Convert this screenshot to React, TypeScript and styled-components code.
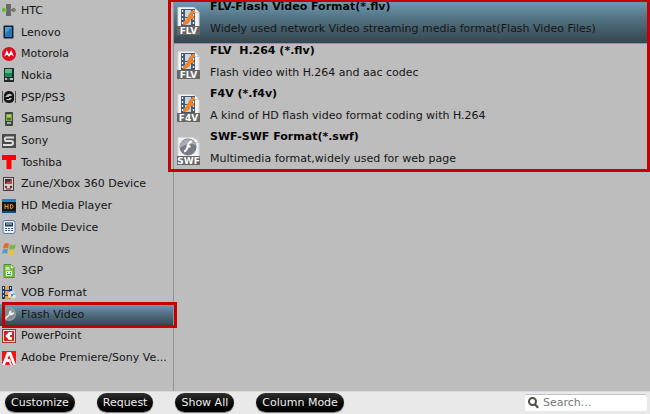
import React from "react";
import styled, { createGlobalStyle, css } from "styled-components";

const GlobalStyle = createGlobalStyle`
  * { box-sizing: border-box; }
  html, body { margin: 0; padding: 0; background: #bdbdbd; }
  body, button, input { font-family: "DejaVu Sans", Verdana, sans-serif; font-size: 11px; }
`;

const Page = styled.div`
  display: flex;
  flex-direction: column;
  height: 100vh;
  overflow: hidden;
  color: #151515;
`;

const Main = styled.main`
  flex: 1;
  display: flex;
  min-height: 0;
`;

const Sidebar = styled.nav`
  flex: 0 0 174px;
  min-width: 0;
  display: flex;
  padding-bottom: 22px;
  border-right: 1px solid #929292;
`;

const DeviceList = styled.ul`
  flex: 1;
  min-width: 0;
  display: grid;
  grid-template-columns: minmax(0, 1fr);
  grid-auto-rows: 1fr;
  margin: 0;
  padding: 0;
  list-style: none;
`;

const selectedFill = css`
  background: linear-gradient(#71a0b8, #547485 40%, #35464e);
`;

const DeviceItem = styled.li<{ $selected?: boolean }>`
  position: relative;
  display: flex;
  min-width: 0;
  ${(p) =>
    p.$selected &&
    css`
      ${selectedFill}
      &::after {
        content: "";
        position: absolute;
        inset: -2px -4px -2px 2px;
        border: 3px solid #c40000;
        pointer-events: none;
      }
    `}
`;

const DeviceButton = styled.button`
  flex: 1;
  min-width: 0;
  display: flex;
  align-items: center;
  gap: 5px;
  padding: 0 2px 1px;
  border: 0;
  background: none;
  color: inherit;
  text-align: left;
  svg { flex: 0 0 14px; }
`;

const DeviceName = styled.span`
  white-space: nowrap;
`;

const FormatPane = styled.section`
  flex: 1;
  min-width: 0;
`;

const FormatList = styled.ul`
  position: relative;
  display: flex;
  flex-direction: column;
  margin: 0;
  padding: 0 0 1px;
  list-style: none;
  &::after {
    content: "";
    position: absolute;
    inset: 0 0 2px -6px;
    border: 3px solid #c40000;
    border-top-width: 2px;
    pointer-events: none;
  }
`;

const FormatItem = styled.li<{ $selected?: boolean }>`
  border-bottom: 0 solid transparent;
  &:first-child { border-bottom-width: 1px; }
  ${(p) => p.$selected && selectedFill}
`;

const FormatButton = styled.button`
  display: flex;
  align-items: flex-start;
  gap: 10px;
  width: 100%;
  height: 43px;
  padding: 0 0 0 3px;
  border: 0;
  background: none;
  color: inherit;
  text-align: left;
  svg { flex: 0 0 23px; margin-top: 7px; }
`;

const FormatText = styled.span`
  display: flex;
  flex-direction: column;
  line-height: 14px;
  gap: 8px;
  white-space: pre;
`;

const FormatTitle = styled.strong`
  color: #050505;
`;

const Toolbar = styled.footer`
  flex: 0 0 23px;
  display: flex;
  align-items: center;
  gap: 22px;
  padding: 0 3px 2px 5px;
  background: #e9e9e9;
  border-top: 1px solid #d8d8d8;
`;

const PillButton = styled.button`
  height: 19px;
  padding: 0 6px;
  border: 0;
  border-radius: 10px;
  background: linear-gradient(#303030, #050505 60%, #000);
  box-shadow: 0 1px 1px #777;
  color: #eee;
  white-space: nowrap;
`;

const SearchBox = styled.label`
  display: flex;
  align-items: center;
  gap: 4px;
  width: 122px;
  height: 17px;
  margin-left: auto;
  padding: 0 3px;
  border-radius: 2px;
  border-top: 1px solid #c4c4c4;
  background: #fff;
`;

const SearchInput = styled.input`
  flex: 1;
  min-width: 0;
  padding: 0;
  border: 0;
  outline: 0;
  background: none;
  &::placeholder { color: #777; opacity: 1; }
`;

const Glyph = ({ children }: { children: React.ReactNode }) => (
  <svg width="14" height="14" viewBox="0 0 14 14" aria-hidden="true">
    {children}
  </svg>
);

const icons: Record<string, React.ReactNode> = {
  HTC: (
    <Glyph>
      <path d="M4 1h5v4.500c-1 .2-1 2.800 0 3V13H4V8.500c1-.2 1-2.800 0-3z" fill="#686868" />
      <path d="M0 6c0-1 1-1.500 2-1.200l1.500 1.200H5v2H3.500L2 9C.8 9.200 0 8.500 0 7.500z" fill="#64bd38" />
      <path d="M8 6h2a2 2 0 1 1 0 2H8z" fill="#777" />
    </Glyph>
  ),
  Lenovo: (
    <Glyph>
      <rect x="1.500" y=".5" width="10" height="13" rx="1" fill="#18202b" />
      <rect x="3" y="2" width="7" height="10" fill="#2377b8" />
      <path d="M3 2h7L3 9z" fill="#4e9cd1" />
    </Glyph>
  ),
  Motorola: (
    <Glyph>
      <circle cx="7" cy="7" r="7" fill="#e20b20" />
      <path d="M2 10 4.800 3 7 7.500 9.200 3 12 10C11 8.500 9.800 8 9 8c-1 0-1.500 1-2 2-.5-1-1-2-2-2-.8 0-2 .5-3 2z" fill="#fff" />
    </Glyph>
  ),
  Nokia: (
    <Glyph>
      <rect x="2" y="0" width="10" height="14" fill="#252b2c" />
      <rect x="3" y="1" width="7" height="4" fill="#55bd83" />
      <path d="M3 5h7v4H3z" fill="#17845a" />
      <path d="M3 10h2v2H3zm5 0h3v2H8z" fill="#b9bcb8" />
      <path d="M5 11h3" stroke="#666" />
    </Glyph>
  ),
  "PSP/PS3": (
    <Glyph>
      <path d="M.5 1v12M13.500 1v12" stroke="#555" />
      <path d="M2 5Q3 1 7 1t5 4v5q-1 3-5 3t-5-3z" fill="#161616" />
      <path d="M4 6q2-3 5-2l1 2H7v1H3zm6 2q-1 3-5 2L4 9h3V8z" fill="#bbb" />
    </Glyph>
  ),
  Samsung: (
    <Glyph>
      <rect x="3" y="0" width="8" height="14" rx="1" fill="#3e493b" />
      <rect x="4" y="2" width="6" height="7" fill="#72a951" />
      <path d="M5 3h4v2H5z" fill="#d4c65c" />
      <path d="M5 7h4" stroke="#244321" />
      <path d="M5 10h4v2H5z" fill="#aaa" />
    </Glyph>
  ),
  Sony: (
    <Glyph>
      <rect width="14" height="14" fill="#4c4c4c" />
      <path d="M12 3.500H4.500Q2.500 3.500 3 5.500T5 7h4q2 0 2 2t-2 2H1" fill="none" stroke="#ddd" strokeWidth="2" />
    </Glyph>
  ),
  Toshiba: (
    <Glyph>
      <path d="M0 0h14v5H9.500v9h-5V5H0z" fill="#f00" />
    </Glyph>
  ),
  "Zune/Xbox 360 Device": (
    <Glyph>
      <rect x="1.500" y=".5" width="10" height="13" fill="#d9d0ce" stroke="#513b3d" />
      <path d="M3 2h7v5H3z" fill="#273444" />
      <path d="m3 7 3-3 1 1 3-3v5z" fill="#cf4141" />
      <circle cx="4" cy="10" r="1.200" fill="#8f3134" />
      <circle cx="9" cy="10" r="1.200" fill="#333" />
      <path d="M4 12h5" stroke="#713" />
    </Glyph>
  ),
  "HD Media Player": (
    <Glyph>
      <rect width="14" height="14" fill="#111821" />
      <path d="M0 0h14v3H0z" fill="#2482c2" />
      <path d="M0 12h14v2H0z" fill="#0b4f8a" />
      <path d="M3 5v5m3-5v5M3 7.500h3M8.500 5.500v4h1q1.500 0 1.500-2t-1.500-2z" fill="none" stroke="#ee9a24" />
    </Glyph>
  ),
  "Mobile Device": (
    <Glyph>
      <rect x="1" y=".5" width="12" height="13" rx="2" fill="#e8f1fb" stroke="#587ba7" />
      <path d="M3 2.500h8v4H3z" fill="#253a50" />
      <path d="M4 4h6" stroke="#bed5e6" />
      <path d="M3 8h2v1H3zm3 0h2v1H6zm3 0h2v1H9zM3 10h2v1H3zm3 0h2v1H6zm3 0h2v1H9z" fill="#3e5d7a" />
    </Glyph>
  ),
  Windows: (
    <Glyph>
      <path d="M2 2q2.500-2 5 0L6 6.500q-2.500-1-5 0z" fill="#e66b2e" />
      <path d="M8 2.500q3 1.500 6 0L12.500 7q-3 1-5.500 0z" fill="#78b83f" />
      <path d="M1 7.500q2.500-1 5 0L5 12q-2-2-5 0z" fill="#509bd3" />
      <path d="M7 8q3 1 5.500 0L11 12.500q-3 1-5-.5z" fill="#f1bf31" />
    </Glyph>
  ),
  "3GP": (
    <Glyph>
      <path d="M2 .5h7l3 3v10H2z" fill="#82bf45" stroke="#4b912f" />
      <path d="M9 1v3h3" fill="#e2f4d2" />
      <path d="M3.500 3h4v3h-4z" fill="#c7e9a8" />
      <path d="M4 7h6v5H4z" fill="#e5f6d7" />
      <path d="M5 8h1v1H5zm3 0h1v1H8zM5 10h4v1H5z" fill="#398b27" />
    </Glyph>
  ),
  "VOB Format": (
    <Glyph>
      <path d="M0 0h10v13H0z" fill="#193d70" />
      <path d="M3 0h4v4H3zm0 5h4v4H3zm0 5h4v3H3z" fill="#eda236" />
      <path d="M1 1h1v2H1zm0 4h1v2H1zm0 4h1v2H1zM8 1h1v2H8z" fill="#b9dfff" />
      <circle cx="10" cy="9" r="4" fill="#d9e9ef" />
      <path d="m10 9 2-3q2 1 2 3z" fill="#79bce2" />
      <path d="m10 9-2 3q2 1 3 1z" fill="#e7b85d" />
      <circle cx="10" cy="9" r="1" fill="#567" />
    </Glyph>
  ),
  "Flash Video": (
    <Glyph>
      <circle cx="7" cy="7" r="7" fill="#9ba1a7" />
      <circle cx="7" cy="7" r="5.800" fill="#858b91" />
      <path d="m3 11 4-4q-1-3 3-4L9 5l1 1 2-1q0 4-4 3l-4 4z" fill="#f1f3f4" />
    </Glyph>
  ),
  PowerPoint: (
    <Glyph>
      <rect x=".5" y=".5" width="13" height="13" fill="#f6dcda" stroke="#a33131" />
      <rect x="2" y="2" width="10" height="10" fill="#c92722" />
      <path d="M10 3H7L3.500 7 7 11h3V8H8V6h2z" fill="#fff" />
    </Glyph>
  ),
  "Adobe Premiere/Sony Ve...": (
    <Glyph>
      <rect width="14" height="14" fill="#f51313" />
      <path d="M0 14 5 1h4l5 13h-3L7 4 5.500 8H8l2 6H8l-1-3H4l-1 3z" fill="#fff" />
    </Glyph>
  ),
};

const SheetIcon = ({ label, flash }: { label: string; flash?: boolean }) => (
  <svg width="23" height="28" viewBox="0 0 23 28" aria-hidden="true">
    <path d="M1 .5h16l5 5V27H1z" fill="#f1f1f1" stroke="#d7d7d7" />
    <path d="M17 .5v5h5z" fill="#fff" stroke="#b5b5b5" strokeWidth=".6" />
    {flash ? (
      <>
        <circle cx="11" cy="10" r="8.500" fill="#767b86" />
        <path d="M3 8a8.500 8.500 0 0 1 16 0Q11 5 3 11z" fill="#a9acb4" />
        <path d="M15 4.500q-3 0-4 4-1 5-4 6M9.500 9.500h4" fill="none" stroke="#fff" strokeWidth="2" />
      </>
    ) : (
      <>
        <path d="M4 2h14v17H4z" fill="#46566c" />
        <path d="M8 3h6v7H8zm0 8h6v7H8z" fill="#c3d6e8" />
        <path d="M5.500 3v15M16.500 3v15" stroke="#edf3fb" strokeWidth="1.300" strokeDasharray="2 2" />
        <path d="M18 3q-5 0-7 6-2 5-5 6v3q6 0 8-6h3V9h-2q1-3 3-3z" fill="#ed842c" />
      </>
    )}
    <rect y="19" width="23" height="9" fill="#666" />
    <text x="11.500" y="27" textAnchor="middle" fontFamily="DejaVu Sans, sans-serif" fontSize="9" fontWeight="700" fill="#fff">
      {label}
    </text>
  </svg>
);

const formats = [
  { label: "FLV", title: "FLV-Flash Video Format(*.flv)", detail: "Widely used network Video streaming media format(Flash Video Files)" },
  { label: "FLV", title: "FLV  H.264 (*.flv)", detail: "Flash video with H.264 and aac codec" },
  { label: "F4V", title: "F4V (*.f4v)", detail: "A kind of HD flash video format coding with H.264" },
  { label: "SWF", title: "SWF-SWF Format(*.swf)", detail: "Multimedia format,widely used for web page" },
];

export default function App() {
  return (
    <Page>
      <GlobalStyle />
      <Main>
        <Sidebar aria-label="Devices">
          <DeviceList>
            {Object.entries(icons).map(([name, icon]) => (
              <DeviceItem key={name} $selected={name === "Flash Video"}>
                <DeviceButton type="button">
                  {icon}
                  <DeviceName>{name}</DeviceName>
                </DeviceButton>
              </DeviceItem>
            ))}
          </DeviceList>
        </Sidebar>
        <FormatPane aria-label="Formats">
          <FormatList>
            {formats.map((f, i) => (
              <FormatItem key={f.title} $selected={i === 0}>
                <FormatButton type="button">
                  <SheetIcon label={f.label} flash={f.label === "SWF"} />
                  <FormatText>
                    <FormatTitle>{f.title}</FormatTitle>
                    <span>{f.detail}</span>
                  </FormatText>
                </FormatButton>
              </FormatItem>
            ))}
          </FormatList>
        </FormatPane>
      </Main>
      <Toolbar>
        {["Customize", "Request", "Show All", "Column Mode"].map((t) => (
          <PillButton key={t} type="button">{t}</PillButton>
        ))}
        <SearchBox>
          <svg width="11" height="12" viewBox="0 0 11 12" aria-hidden="true">
            <circle cx="4.500" cy="4.500" r="3.500" fill="none" stroke="#574848" strokeWidth="2" />
            <path d="m7 7.500 3.200 3.300" stroke="#574848" strokeWidth="2.200" />
          </svg>
          <SearchInput type="text" aria-label="Search" placeholder="Search..." />
        </SearchBox>
      </Toolbar>
    </Page>
  );
}
